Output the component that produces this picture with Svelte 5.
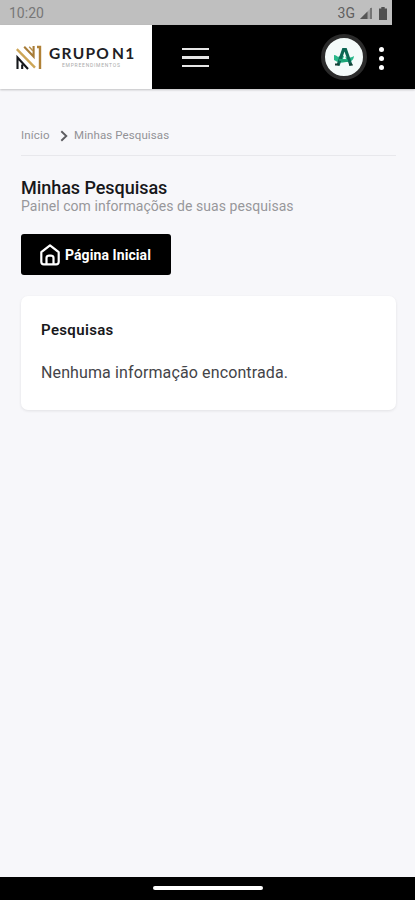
<script>
    const breadcrumb = { home: "Início", current: "Minhas Pesquisas" };
    const searches = [];
</script>

<div class="screen">
    <div class="status-bar">
        <div class="status-info">
            <span class="clock">10:20</span>
            <span class="network">3G</span>
            <svg class="signal" width="12" height="12" viewBox="0 0 12 12">
                <path d="M0 12 12 0V12Z" fill="#a2a2a2" />
                <path d="M0 12 7.5 4.5V12Z" fill="#555" />
                <path d="M11 1V12" stroke="#666" stroke-width="1.5" />
            </svg>
            <svg width="8" height="13" viewBox="0 0 8 13">
                <path d="M2.3 0h3.4v1.5H8V13H0V1.5h2.3Z" fill="#505050" />
            </svg>
        </div>
    </div>

    <header>
        <div class="brand">
            <svg width="26" height="25" viewBox="0 0 26 25">
                <path d="M1.5 24V12.5L12 24M6.2 19.5V24" fill="none" stroke="#15171b" stroke-width="2.1" />
                <path d="M.8 4.2 19 22.6" stroke="#cda657" stroke-width="2.4" />
                <path d="M8.2 1.8 17.6 11.6V1" fill="none" stroke="#a77c38" stroke-width="2.1" />
                <path d="M13.2 1.8l3.6 4" stroke="#b78d48" stroke-width="1.4" />
                <path d="M21 2h3v22" fill="none" stroke="#b08137" stroke-width="2.4" />
            </svg>
            <div class="brand-text">
                <span class="brand-name">GRUPO<span class="brand-n">N1</span></span>
                <span class="brand-sub">EMPREENDIMENTOS</span>
            </div>
        </div>
        <button class="menu" aria-label="Menu">
            <span></span>
            <span></span>
            <span></span>
        </button>
        <div class="avatar">
            <svg width="22" height="20" viewBox="0 0 22 20">
                <path
                    d="M1 8c2 0 3 1 4 2 3-2 6-1 8 0 2 1 5 1 8-1-.5 4-3 6-6 6-3 0-5 1-8 .5C4 15 3 14 1 13Z"
                    fill="#28b88a"
                />
                <path d="M5 18.500 10.500 2.500h2L18 18.500" fill="none" stroke="#0b6653" stroke-width="3.2" />
                <path d="M11.500 7 13 12h-3Z" fill="#f4fbfa" />
                <path d="M6 13c3-1 5 2 9 .5" fill="none" stroke="#1da477" stroke-width="2.4" />
                <path d="M2 16.500h4v2H2ZM16 16.500h3l1 2h-4Z" fill="#173d35" />
            </svg>
        </div>
        <button class="more" aria-label="Mais opções">
            <i></i>
            <i></i>
            <i></i>
        </button>
    </header>

    <main>
        <nav>
            <a href="/">{breadcrumb.home}</a>
            <svg width="8" height="12" viewBox="0 0 8 12">
                <path d="m1.3 1.2 5 4.8-5 4.8" fill="none" stroke="#5d5d61" stroke-width="1.9" />
            </svg>
            <span class="current">{breadcrumb.current}</span>
        </nav>

        <h1>Minhas Pesquisas</h1>
        <p class="subtitle">Painel com informações de suas pesquisas</p>

        <button class="home-button">
            <svg width="20" height="22" viewBox="0 0 20 22">
                <path
                    d="M1.3 8.2 10 1.3l8.7 6.9v9.6q0 2.6-2.6 2.6H3.9q-2.6 0-2.6-2.6Z M6.5 20v-6q0-2.4 2.4-2.4h2.2q2.4 0 2.4 2.4v6"
                    fill="none"
                    stroke="#fff"
                    stroke-width="2.2"
                    stroke-linejoin="round"
                />
            </svg>
            <span>Página Inicial</span>
        </button>

        <section class="card">
            <h2>Pesquisas</h2>
            {#if searches.length === 0}
                <p>Nenhuma informação encontrada.</p>
            {/if}
        </section>
    </main>

    <div class="gesture-bar"><span></span></div>
</div>

<style>
    :global(body) {
        margin: 0;
        background: #f7f7fa;
    }

    .screen {
        display: flex;
        flex-direction: column;
        height: 900px;
        overflow: hidden;
        font-family: Roboto, "Liberation Sans", sans-serif;
        background: #f7f7fa;
    }

    button {
        border: none;
        padding: 0;
        font-family: inherit;
    }

    h1,
    h2,
    p {
        margin: 0;
        white-space: nowrap;
    }

    /* Status bar */
    .status-bar {
        height: 25px;
        flex-shrink: 0;
        background: #000;
    }

    .status-info {
        display: flex;
        align-items: center;
        box-sizing: border-box;
        width: 392px;
        height: 25px;
        padding: 1px 5px 0 9px;
        background: #bfbfbf;
        color: #777;
        font-size: 14px;
    }

    .network {
        margin-left: auto;
        color: #606060;
    }

    .signal {
        margin: 0 7px 0 5px;
    }

    /* Header */
    header {
        display: flex;
        align-items: center;
        height: 64px;
        flex-shrink: 0;
        background: #000;
        box-shadow: 0 1px 2px rgba(0, 0, 0, 0.22);
    }

    .brand {
        display: flex;
        align-items: center;
        box-sizing: border-box;
        width: 152px;
        height: 64px;
        padding-left: 16px;
        background: #fff;
    }

    .brand-text {
        display: flex;
        flex-direction: column;
        margin: -2px 0 0 7px;
    }

    .brand-name {
        font-family: Lato, sans-serif;
        font-size: 15.5px;
        font-weight: 700;
        line-height: 19px;
        letter-spacing: 1.25px;
        color: #202024;
        white-space: nowrap;
    }

    .brand-n {
        margin-left: 2px;
    }

    .brand-sub {
        margin-left: 13px;
        font-size: 5px;
        line-height: 5px;
        letter-spacing: 0.75px;
        color: #aaa;
    }

    .menu {
        display: flex;
        flex-direction: column;
        gap: 6px;
        margin: 1px 0 0 29.5px;
        background: none;
    }

    .menu span {
        width: 27px;
        height: 2.5px;
        background: #e6e6e6;
    }

    .avatar {
        display: flex;
        align-items: center;
        justify-content: center;
        width: 38px;
        height: 38px;
        margin-left: auto;
        border: 4px solid #2b2b2b;
        border-radius: 50%;
        background: #f4fbfa;
    }

    .more {
        display: flex;
        flex-direction: column;
        gap: 4px;
        margin: 2px 31px 0 12px;
        background: none;
    }

    .more i {
        width: 5px;
        height: 5px;
        border-radius: 50%;
        background: #fff;
    }

    /* Content */
    main {
        flex: 1;
        padding: 36px 19px 0 21px;
    }

    nav {
        display: flex;
        align-items: center;
        height: 30px;
        border-bottom: 1px solid #e8e8ec;
        font-size: 11.5px;
        color: #929296;
    }

    nav a {
        width: 39px;
        padding-bottom: 10px;
        color: inherit;
        text-decoration: none;
        letter-spacing: 0.15px;
    }

    nav svg {
        margin: 0 6px 9px 0;
    }

    nav .current {
        padding-bottom: 10px;
        letter-spacing: 0.1px;
    }

    h1 {
        margin-top: 21px;
        font-size: 18px;
        font-weight: 500;
        line-height: 21px;
        letter-spacing: -0.05px;
        color: #17171a;
    }

    .subtitle {
        font-size: 14px;
        line-height: 16px;
        letter-spacing: 0.05px;
        color: #97979b;
    }

    .home-button {
        display: flex;
        align-items: center;
        width: 150px;
        height: 41px;
        margin-top: 20px;
        padding-left: 19px;
        border-radius: 3px;
        background: #000;
        color: #fff;
        font-size: 14px;
        font-weight: 700;
        letter-spacing: 0.08px;
        white-space: nowrap;
    }

    .home-button span {
        margin-left: 5px;
    }

    .card {
        box-sizing: border-box;
        height: 114px;
        margin-top: 21px;
        padding: 24px 20px;
        border-radius: 7px;
        background: #fff;
        box-shadow: 0 1px 3px rgba(0, 0, 0, 0.09);
    }

    h2 {
        font-size: 15px;
        font-weight: 600;
        line-height: 20px;
        letter-spacing: 0.35px;
        color: #18181b;
    }

    .card p {
        margin-top: 22px;
        font-size: 16px;
        line-height: 21px;
        letter-spacing: 0.12px;
        color: #444448;
    }

    /* Bottom gesture bar */
    .gesture-bar {
        display: flex;
        justify-content: center;
        height: 23px;
        flex-shrink: 0;
        background: #000;
    }

    .gesture-bar span {
        width: 110px;
        height: 4px;
        margin-top: 9px;
        border-radius: 2px;
        background: #fff;
    }
</style>
